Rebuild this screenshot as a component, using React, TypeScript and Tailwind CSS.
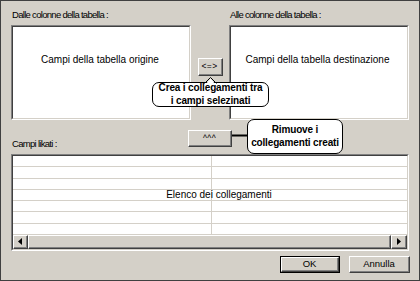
import React from 'react';

// Classic Win9x 3D edges
const Raised: React.FC<{ className?: string; children?: React.ReactNode }> = ({ className = '', children }) => (
  <div className={`border border-t-white border-l-white border-b-[#404040] border-r-[#404040] ${className}`}>
    <div className="w-full h-full border-b border-r border-b-[#808080] border-r-[#808080] flex items-center justify-center">
      {children}
    </div>
  </div>
);

const Sunken: React.FC<{ className?: string; children?: React.ReactNode }> = ({ className = '', children }) => (
  <div className={`border border-t-[#808080] border-l-[#808080] border-b-white border-r-white ${className}`}>
    <div className="w-full h-full border border-t-[#404040] border-l-[#404040] border-b-[#d4d0c8] border-r-[#d4d0c8] bg-white relative overflow-hidden">
      {children}
    </div>
  </div>
);

const Label: React.FC<{ children: React.ReactNode }> = ({ children }) => (
  <div className="h-[11px] leading-[11px] text-[9.5px] tracking-[-0.7px] pl-[1px] whitespace-nowrap">{children}</div>
);

const Callout: React.FC<{ className: string; lines: string[] }> = ({ className, lines }) => (
  <div
    className={`absolute bg-white border border-black rounded-[7px] flex flex-col items-center justify-center font-bold text-[10px] leading-[12.5px] tracking-[-0.15px] whitespace-nowrap ${className}`}
  >
    {lines.map((l) => (
      <span key={l}>{l}</span>
    ))}
  </div>
);

export default function App() {
  const rows = [0, 1, 2, 3, 4, 5, 6];

  return (
    <div className="w-[420px] h-[281px] bg-[#d4d0c8] border border-[#404040] relative overflow-hidden text-black font-['Liberation_Sans',Arial,sans-serif]">
      <div className="pl-[10px] pt-[8px]">
        {/* ── Source / destination lists ── */}
        <div className="flex">
          <div className="w-[180px] flex flex-col">
            <Label>Dalle colonne della tabella :</Label>
            <Sunken className="mt-[5px] h-[95px]">
              <div className="pt-[27px] text-center text-[10px] leading-[12px] pr-[2px]">
                Campi della tabella origine
              </div>
            </Sunken>
          </div>

          <div className="w-[38px] flex flex-col items-center pt-[49px]">
            <Raised className="w-[25px] h-[18px]">
              <span className="text-[8.5px] leading-none tracking-[0.4px]">&lt;=&gt;</span>
            </Raised>
          </div>

          <div className="w-[180px] flex flex-col">
            <Label>Alle colonne della tabella :</Label>
            <Sunken className="mt-[5px] h-[95px]">
              <div className="pt-[27px] text-center text-[10px] leading-[12px] pr-[3px]">
                Campi della tabella destinazione
              </div>
            </Sunken>
          </div>
        </div>

        {/* ── Middle strip ── */}
        <div className="flex h-[34px]">
          <div className="w-[180px] flex items-end pb-[5px]">
            <Label>Campi likati :</Label>
          </div>
          <div className="w-[38px] flex justify-center pt-[10px]">
            <Raised className="w-[44px] h-[17px] shrink-0">
              <span className="text-[8.5px] leading-none pt-[1px] tracking-[0.3px]">^^^</span>
            </Raised>
          </div>
        </div>

        {/* ── Links list ── */}
        <Sunken className="w-[398px] h-[97px]">
          <div className="flex flex-col h-[79px]">
            {rows.map((r) => (
              <div key={r} className="flex-1 flex border-b border-[#d4d0c8] relative">
                <div className="w-[199px] border-r border-[#d4d0c8]" />
                <div className="flex-1" />
                {r === 3 && (
                  <div className="absolute inset-0 flex items-center justify-center pl-[18px] text-[10px] leading-[12px] whitespace-nowrap">
                    Elenco dei collegamenti
                  </div>
                )}
              </div>
            ))}
          </div>
          <div className="flex h-[14px] bg-[#d4d0c8]">
            <Raised className="w-[15px] h-[14px]">
              <svg width="4" height="7" viewBox="0 0 4 7">
                <path d="M4 0 L0 3.5 L4 7 Z" fill="black" />
              </svg>
            </Raised>
            <Raised className="flex-1 h-[14px]" />
            <Raised className="w-[16px] h-[14px]">
              <svg width="4" height="7" viewBox="0 0 4 7">
                <path d="M0 0 L4 3.5 L0 7 Z" fill="black" />
              </svg>
            </Raised>
          </div>
        </Sunken>

        {/* ── Dialog buttons ── */}
        <div className="w-[399px] flex justify-end gap-[9px] mt-[5px]">
          <div className="border border-black w-[60px] h-[17px]">
            <Raised className="w-full h-full">
              <span className="text-[9.5px] leading-none">OK</span>
            </Raised>
          </div>
          <Raised className="w-[61px] h-[17px]">
            <span className="text-[9.5px] leading-none">Annulla</span>
          </Raised>
        </div>
      </div>

      {/* ── Help callouts ── */}
      <svg className="absolute left-0 top-0 pointer-events-none" width="420" height="281">
        <line x1="231" y1="134.5" x2="247" y2="134.5" stroke="black" strokeWidth="2" />
      </svg>
      <Callout className="left-[151px] top-[81px] w-[117px] h-[25px]" lines={['Crea i collegamenti tra', 'i campi selezinati']} />
      <Callout className="left-[246px] top-[118px] w-[96px] h-[35px]" lines={['Rimuove i', 'collegamenti creati']} />
      <svg className="absolute left-0 top-0 pointer-events-none" width="420" height="281">
        <path d="M204 84 L209.5 77.5 L215 84 Z" fill="white" stroke="none" />
        <path d="M203.5 82.5 L209.5 76.5 L215.5 82.5" fill="none" stroke="black" strokeWidth="1" />
      </svg>
    </div>
  );
}
